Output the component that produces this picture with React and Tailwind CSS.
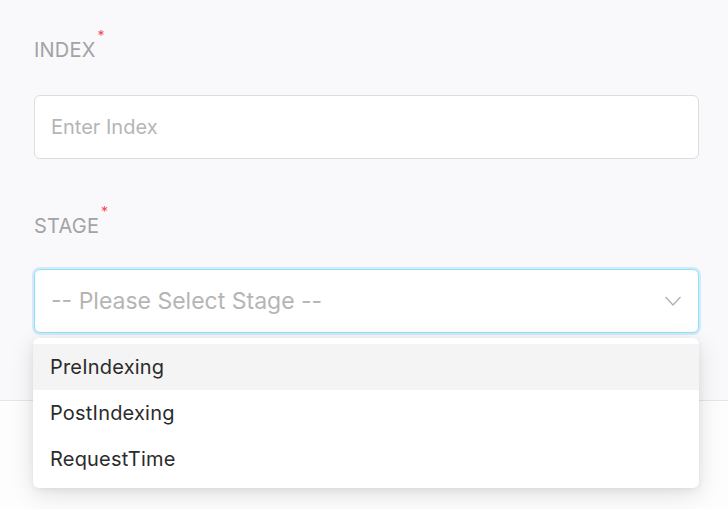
const OPTIONS = ["PreIndexing", "PostIndexing", "RequestTime"];

function Label({ children }) {
  return (
    <div className="flex items-start text-[20px] leading-[24px] text-[#a3a3a3] tracking-[0.2px]">
      <span>{children}</span>
      <span className="text-[#f5484d] text-[14px] leading-[14px] ml-[2px] -mt-[9px]">*</span>
    </div>
  );
}

export default function App() {
  return (
    <div className="w-[728px] h-[509px] overflow-hidden bg-[#f9f9fb] font-['Inter',sans-serif] flex flex-col">
      {/* Form fields */}
      <div className="pl-[34px] pr-[29px] pt-[38px] h-[401px] border-b border-[#e6e6ea] relative">
        <Label>INDEX</Label>
        <input
          placeholder="Enter Index"
          className="mt-[33px] w-full h-[64px] rounded-[6px] border border-[#dddddf] bg-white px-[16px] text-[20px] text-[#333] placeholder:text-[#b5b5b5] outline-none"
        />

        <div className="mt-[55px]">
          <Label>STAGE</Label>
        </div>

        <div className="relative mt-[31px]">
          <div className="w-full h-[64px] rounded-[6px] border border-[#86e8ee] ring-2 ring-[#d6e8fc] bg-white flex items-center justify-between px-[16px]">
            <span className="text-[23px] text-[#b5b5b5]">-- Please Select Stage --</span>
            <svg width="18" height="12" viewBox="0 0 18 12">
              <polyline points="1.5,2 9,10 16.5,2" fill="none" stroke="#b0b0b0" strokeWidth="1.3" />
            </svg>
          </div>

          {/* Dropdown menu */}
          <div className="absolute left-[-1px] right-0 top-[69px] z-10 bg-white rounded-[6px] py-[6px] shadow-[0_6px_24px_rgba(0,0,0,0.12),0_2px_6px_rgba(0,0,0,0.06)]">
            {OPTIONS.map((o, i) => (
              <div
                key={o}
                className={`h-[46px] flex items-center px-[17px] text-[20px] tracking-[0.2px] text-[#2b2b2b] ${i === 0 ? "bg-[#f4f4f4]" : ""}`}
              >
                {o}
              </div>
            ))}
          </div>
        </div>
      </div>

      {/* Footer */}
      <div className="flex-1 bg-[#fdfdfd] flex justify-end items-start pr-[29px] pt-[33px]">
        <button className="h-[47px] px-[28px] rounded-[6px] border border-[#5fd9d1] text-[#3bb8b0] text-[18px]">
          Submit
        </button>
      </div>
    </div>
  );
}
